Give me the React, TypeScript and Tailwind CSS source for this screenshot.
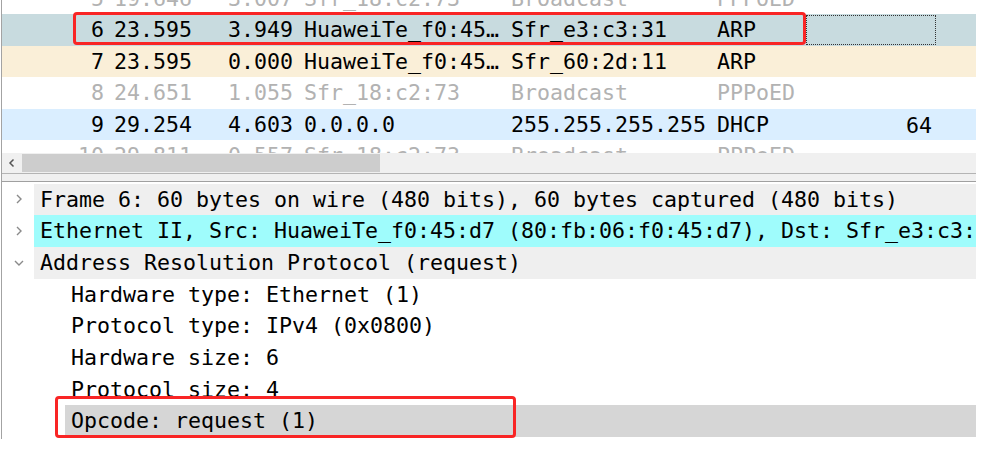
import React from 'react';

type Packet = {
  no: string;
  time: string;
  delta: string;
  src: string;
  dst: string;
  proto: string;
  len: string;
  bg: string;
  dim?: boolean;
  focus?: boolean;
};

const packets: Packet[] = [
  { no: '5', time: '19.646', delta: '3.007', src: 'Sfr_18:c2:73', dst: 'Broadcast', proto: 'PPPoED', len: '', bg: 'bg-white', dim: true },
  { no: '6', time: '23.595', delta: '3.949', src: 'HuaweiTe_f0:45:d7', dst: 'Sfr_e3:c3:31', proto: 'ARP', len: '', bg: 'bg-[#c8dbdf]', focus: true },
  { no: '7', time: '23.595', delta: '0.000', src: 'HuaweiTe_f0:45:d7', dst: 'Sfr_60:2d:11', proto: 'ARP', len: '', bg: 'bg-[#faefd8]' },
  { no: '8', time: '24.651', delta: '1.055', src: 'Sfr_18:c2:73', dst: 'Broadcast', proto: 'PPPoED', len: '', bg: 'bg-white', dim: true },
  { no: '9', time: '29.254', delta: '4.603', src: '0.0.0.0', dst: '255.255.255.255', proto: 'DHCP', len: '64', bg: 'bg-[#daeeff]' },
  { no: '10', time: '29.811', delta: '0.557', src: 'Sfr_18:c2:73', dst: 'Broadcast', proto: 'PPPoED', len: '', bg: 'bg-white', dim: true },
];

function PacketRow({ p }: { p: Packet }) {
  return (
    <div className={`flex h-[31.5px] leading-[31.5px] whitespace-nowrap ${p.bg} ${p.dim ? 'text-[#b2b2b2]' : 'text-black'}`}>
      <div className="w-[107px] pr-[5px] text-right">{p.no}</div>
      <div className="w-[91px] pl-[5px]">{p.time}</div>
      <div className="w-[99px] pr-[6px] text-right">{p.delta}</div>
      <div className="w-[207px] px-[5px] overflow-hidden text-ellipsis">{p.src}</div>
      <div className="w-[206px] px-[5px]">{p.dst}</div>
      <div className="w-[94px] px-[5px]">{p.proto}</div>
      <div className="w-[130px] py-px">
        <div className={`h-full pr-[3px] text-right leading-[29.5px] border border-dotted ${p.focus ? 'border-[#333]' : 'border-transparent'}`}>
          {p.len}
        </div>
      </div>
      <div className="flex-1" />
    </div>
  );
}

function Chevron({ open }: { open: boolean }) {
  return (
    <svg width="12" height="12" viewBox="0 0 12 12" className="text-[#8a8a8a]">
      {open ? (
        <path d="M2 4 L6 8 L10 4" fill="none" stroke="currentColor" strokeWidth="1.4" />
      ) : (
        <path d="M4 2 L8 6 L4 10" fill="none" stroke="currentColor" strokeWidth="1.4" />
      )}
    </svg>
  );
}

type Field = { text: string; level: 0 | 1; open?: boolean; bg: string };

const fields: Field[] = [
  { text: 'Frame 6: 60 bytes on wire (480 bits), 60 bytes captured (480 bits)', level: 0, open: false, bg: 'bg-[#efefef]' },
  { text: 'Ethernet II, Src: HuaweiTe_f0:45:d7 (80:fb:06:f0:45:d7), Dst: Sfr_e3:c3:31 (00:24:d4:e3:c3:31)', level: 0, open: false, bg: 'bg-[#9ffcfc]' },
  { text: 'Address Resolution Protocol (request)', level: 0, open: true, bg: 'bg-[#efefef]' },
  { text: 'Hardware type: Ethernet (1)', level: 1, bg: 'bg-white' },
  { text: 'Protocol type: IPv4 (0x0800)', level: 1, bg: 'bg-white' },
  { text: 'Hardware size: 6', level: 1, bg: 'bg-white' },
  { text: 'Protocol size: 4', level: 1, bg: 'bg-white' },
  { text: 'Opcode: request (1)', level: 1, bg: 'bg-[#d6d6d6]' },
];

function FieldRow({ f }: { f: Field }) {
  return (
    <div className="flex h-[31.7px] whitespace-nowrap">
      <div className={`${f.level === 0 ? 'w-[32px]' : 'w-[63px]'} flex items-center justify-center pl-[2px]`}>
        {f.level === 0 && <Chevron open={!!f.open} />}
      </div>
      <div className={`flex-1 pl-[6px] leading-[31.7px] overflow-hidden ${f.bg}`}>{f.text}</div>
    </div>
  );
}

export default function App() {
  return (
    <div className="relative w-[986px] h-[454px] bg-white overflow-hidden font-['DejaVu_Sans_Mono',monospace] text-[21.6px] text-black">
      <div className="ml-px w-[975px] h-[439px] border-l border-[#a3a3a3] flex flex-col">
        <div className="h-[152.5px] overflow-hidden">
          <div className="-mt-[17.5px]">
            {packets.map((p) => (
              <PacketRow key={p.no} p={p} />
            ))}
          </div>
        </div>
        <div className="h-[20px] bg-[#f0f0f0] flex items-center">
          <div className="w-[20px] flex justify-center">
            <svg width="10" height="10" viewBox="0 0 10 10">
              <path d="M6.5 1.5 L3 5 L6.5 8.5" fill="none" stroke="#555" strokeWidth="1.5" />
            </svg>
          </div>
          <div className="w-[358px] h-[18px] bg-[#cdcdcd]" />
        </div>
        <div className="h-px bg-[#b4b4b4]" />
        <div className="h-[7px] bg-[#f0f0f0]" />
        <div className="h-px bg-[#a0a0a0]" />
        <div className="flex-1 pt-[2px] overflow-hidden">
          {fields.map((f) => (
            <FieldRow key={f.text} f={f} />
          ))}
        </div>
      </div>

      <div className="absolute left-[73px] top-[12px] w-[733px] h-[33px] border-[3px] border-[#f92525] rounded-[4px]" />
      <div className="absolute left-[55px] top-[396px] w-[461px] h-[42px] border-[3px] border-[#f92525] rounded-[4px]" />
    </div>
  );
}
